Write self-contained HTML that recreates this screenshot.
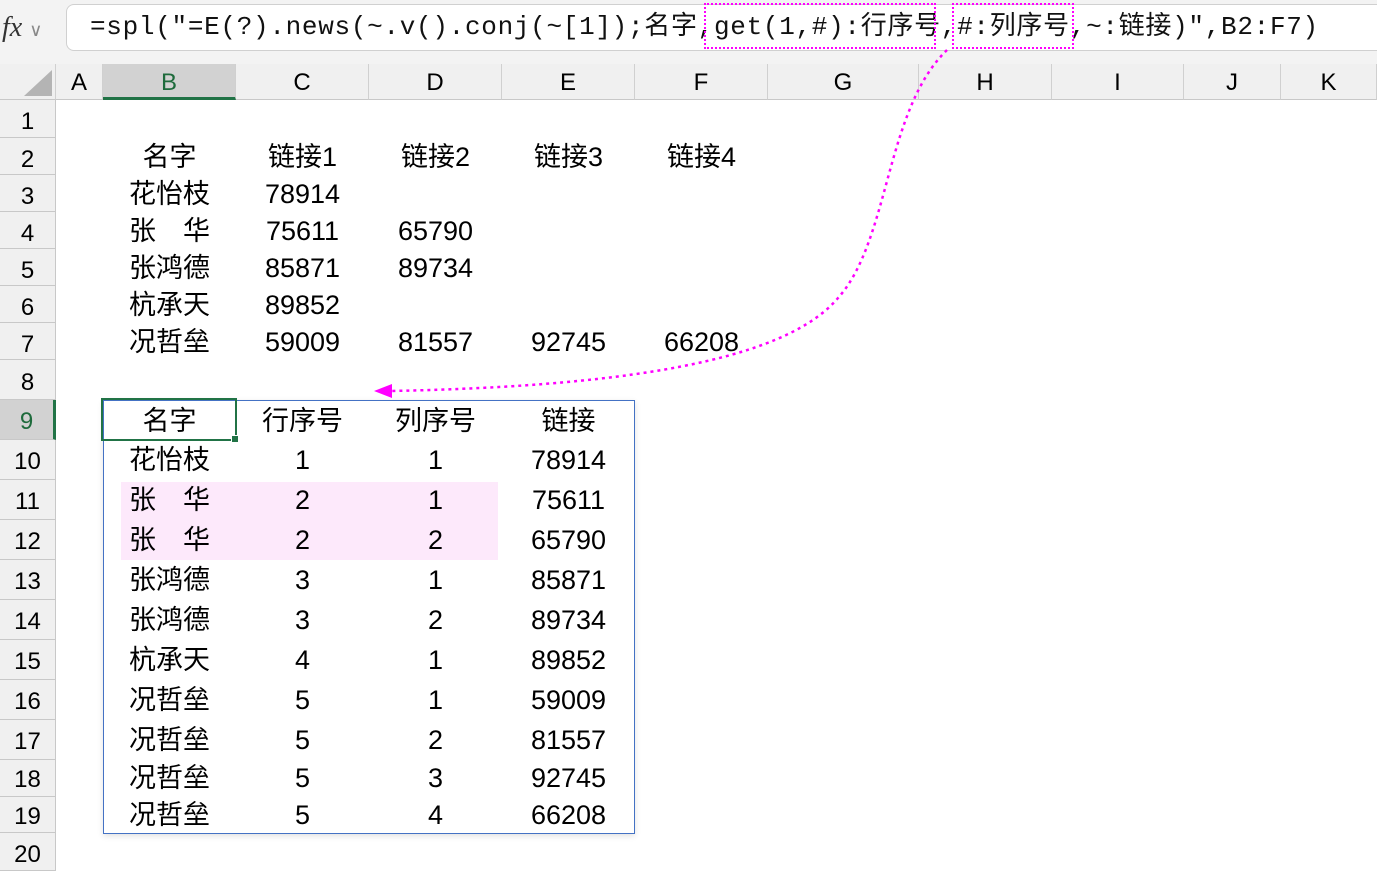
<!DOCTYPE html>
<html><head><meta charset="utf-8"><style>
*{margin:0;padding:0;box-sizing:border-box}
body{width:1377px;height:871px;overflow:hidden;background:#fff;position:relative;font-family:"Liberation Sans","Noto Sans CJK SC",sans-serif;color:#000}
.top{position:absolute;left:0;top:0;width:1377px;height:64px;background:#f3f3f3}
.fbox{position:absolute;left:66px;top:4px;width:1320px;height:47px;background:#fff;border:1px solid #d0d0d0;border-radius:8px}
.ftext{position:absolute;left:90px;top:9px;font-family:"Liberation Mono","Noto Sans CJK SC",monospace;font-size:26px;letter-spacing:0.7px;white-space:nowrap;color:#111;line-height:36px}
.hdr{position:absolute;top:64px;height:36px;line-height:38px;text-align:center;font-size:24px;background:#f0f0f0;border-right:1px solid #d0d0d0;border-bottom:1px solid #c8c8c8}
.rh{position:absolute;left:0;width:56px;text-align:center;font-size:24px;background:#f0f0f0;border-bottom:1px solid #c8c8c8;border-right:1px solid #c8c8c8;padding-top:3px}
.c{position:absolute;text-align:center;font-size:27px;white-space:nowrap}
</style></head><body>
<div class="top"></div>
<div style="position:absolute;left:0;top:8px;width:56px;height:40px;font-family:'Liberation Serif',serif;font-style:italic;font-size:28px;line-height:40px;color:#333;padding-left:2px">fx <span style="font-style:normal;font-size:18px;color:#888;font-family:'Liberation Sans'">∨</span></div>
<div class="fbox"></div>
<div class="ftext">=spl("=E(?).news(~.v().conj(~[1]);名字,get(1,#):行序号,#:列序号,~:链接)",B2:F7)</div>
<div style="position:absolute;left:704px;top:3px;width:232px;height:46px;border:2px dotted #f0f"></div>
<div style="position:absolute;left:952px;top:3px;width:122px;height:46px;border:2px dotted #f0f"></div>

<div class="hdr" style="left:0;width:56px"></div>
<svg style="position:absolute;left:18px;top:68px" width="36" height="30"><polygon points="34,2 34,28 6,28" fill="#b4b4b4"/></svg>
<div class="hdr" style="left:56px;width:47px">A</div>
<div class="hdr" style="left:103px;width:133px;background:#d2d2d2;color:#1e6b3c;border-bottom:3px solid #217346">B</div>
<div class="hdr" style="left:236px;width:133px">C</div>
<div class="hdr" style="left:369px;width:133px">D</div>
<div class="hdr" style="left:502px;width:133px">E</div>
<div class="hdr" style="left:635px;width:133px">F</div>
<div class="hdr" style="left:768px;width:151px">G</div>
<div class="hdr" style="left:919px;width:133px">H</div>
<div class="hdr" style="left:1052px;width:132px">I</div>
<div class="hdr" style="left:1184px;width:97px">J</div>
<div class="hdr" style="left:1281px;width:96px">K</div>

<div class="rh" style="top:100px;height:38px;line-height:38px">1</div>
<div class="rh" style="top:138px;height:37px;line-height:37px">2</div>
<div class="rh" style="top:175px;height:37px;line-height:37px">3</div>
<div class="rh" style="top:212px;height:37px;line-height:37px">4</div>
<div class="rh" style="top:249px;height:37px;line-height:37px">5</div>
<div class="rh" style="top:286px;height:37px;line-height:37px">6</div>
<div class="rh" style="top:323px;height:37px;line-height:37px">7</div>
<div class="rh" style="top:360px;height:40px;line-height:40px">8</div>
<div class="rh" style="top:400px;height:40px;line-height:37px;background:#d2d2d2;color:#1e6b3c;border-right:3px solid #217346">9</div>
<div class="rh" style="top:440px;height:40px;line-height:37px">10</div>
<div class="rh" style="top:480px;height:40px;line-height:37px">11</div>
<div class="rh" style="top:520px;height:40px;line-height:37px">12</div>
<div class="rh" style="top:560px;height:40px;line-height:37px">13</div>
<div class="rh" style="top:600px;height:40px;line-height:37px">14</div>
<div class="rh" style="top:640px;height:40px;line-height:37px">15</div>
<div class="rh" style="top:680px;height:40px;line-height:37px">16</div>
<div class="rh" style="top:720px;height:40px;line-height:37px">17</div>
<div class="rh" style="top:760px;height:37px;line-height:34px">18</div>
<div class="rh" style="top:797px;height:36px;line-height:33px">19</div>
<div class="rh" style="top:833px;height:38px;line-height:37px">20</div>

<div class="c" style="left:103px;width:133px;top:139px;line-height:37px">名字</div>
<div class="c" style="left:236px;width:133px;top:139px;line-height:37px">链接1</div>
<div class="c" style="left:369px;width:133px;top:139px;line-height:37px">链接2</div>
<div class="c" style="left:502px;width:133px;top:139px;line-height:37px">链接3</div>
<div class="c" style="left:635px;width:133px;top:139px;line-height:37px">链接4</div>

<div class="c" style="left:103px;width:133px;top:176px;line-height:37px">花怡枝</div>
<div class="c" style="left:236px;width:133px;top:176px;line-height:37px">78914</div>
<div class="c" style="left:103px;width:133px;top:213px;line-height:37px">张　华</div>
<div class="c" style="left:236px;width:133px;top:213px;line-height:37px">75611</div>
<div class="c" style="left:369px;width:133px;top:213px;line-height:37px">65790</div>
<div class="c" style="left:103px;width:133px;top:250px;line-height:37px">张鸿德</div>
<div class="c" style="left:236px;width:133px;top:250px;line-height:37px">85871</div>
<div class="c" style="left:369px;width:133px;top:250px;line-height:37px">89734</div>
<div class="c" style="left:103px;width:133px;top:287px;line-height:37px">杭承天</div>
<div class="c" style="left:236px;width:133px;top:287px;line-height:37px">89852</div>
<div class="c" style="left:103px;width:133px;top:324px;line-height:37px">况哲垒</div>
<div class="c" style="left:236px;width:133px;top:324px;line-height:37px">59009</div>
<div class="c" style="left:369px;width:133px;top:324px;line-height:37px">81557</div>
<div class="c" style="left:502px;width:133px;top:324px;line-height:37px">92745</div>
<div class="c" style="left:635px;width:133px;top:324px;line-height:37px">66208</div>

<div style="position:absolute;left:103px;top:400px;width:532px;height:434px;border:1px solid #4472c4;box-shadow:0 2px 6px rgba(0,0,0,0.12)"></div>
<div style="position:absolute;left:121px;top:482px;width:377px;height:78px;background:#fde9fb"></div>
<div style="position:absolute;left:101px;top:398px;width:136px;height:43px;border:2px solid #217346"></div>
<div style="position:absolute;left:231px;top:435px;width:8px;height:8px;background:#217346;border:1px solid #fff"></div>

<div class="c" style="left:103px;width:133px;top:401px;line-height:40px">名字</div>
<div class="c" style="left:236px;width:133px;top:401px;line-height:40px">行序号</div>
<div class="c" style="left:369px;width:133px;top:401px;line-height:40px">列序号</div>
<div class="c" style="left:502px;width:133px;top:401px;line-height:40px">链接</div>

<div class="c" style="left:103px;width:133px;top:440px;line-height:40px">花怡枝</div><div class="c" style="left:236px;width:133px;top:440px;line-height:40px">1</div><div class="c" style="left:369px;width:133px;top:440px;line-height:40px">1</div><div class="c" style="left:502px;width:133px;top:440px;line-height:40px">78914</div>
<div class="c" style="left:103px;width:133px;top:480px;line-height:40px">张　华</div><div class="c" style="left:236px;width:133px;top:480px;line-height:40px">2</div><div class="c" style="left:369px;width:133px;top:480px;line-height:40px">1</div><div class="c" style="left:502px;width:133px;top:480px;line-height:40px">75611</div>
<div class="c" style="left:103px;width:133px;top:520px;line-height:40px">张　华</div><div class="c" style="left:236px;width:133px;top:520px;line-height:40px">2</div><div class="c" style="left:369px;width:133px;top:520px;line-height:40px">2</div><div class="c" style="left:502px;width:133px;top:520px;line-height:40px">65790</div>
<div class="c" style="left:103px;width:133px;top:560px;line-height:40px">张鸿德</div><div class="c" style="left:236px;width:133px;top:560px;line-height:40px">3</div><div class="c" style="left:369px;width:133px;top:560px;line-height:40px">1</div><div class="c" style="left:502px;width:133px;top:560px;line-height:40px">85871</div>
<div class="c" style="left:103px;width:133px;top:600px;line-height:40px">张鸿德</div><div class="c" style="left:236px;width:133px;top:600px;line-height:40px">3</div><div class="c" style="left:369px;width:133px;top:600px;line-height:40px">2</div><div class="c" style="left:502px;width:133px;top:600px;line-height:40px">89734</div>
<div class="c" style="left:103px;width:133px;top:640px;line-height:40px">杭承天</div><div class="c" style="left:236px;width:133px;top:640px;line-height:40px">4</div><div class="c" style="left:369px;width:133px;top:640px;line-height:40px">1</div><div class="c" style="left:502px;width:133px;top:640px;line-height:40px">89852</div>
<div class="c" style="left:103px;width:133px;top:680px;line-height:40px">况哲垒</div><div class="c" style="left:236px;width:133px;top:680px;line-height:40px">5</div><div class="c" style="left:369px;width:133px;top:680px;line-height:40px">1</div><div class="c" style="left:502px;width:133px;top:680px;line-height:40px">59009</div>
<div class="c" style="left:103px;width:133px;top:720px;line-height:40px">况哲垒</div><div class="c" style="left:236px;width:133px;top:720px;line-height:40px">5</div><div class="c" style="left:369px;width:133px;top:720px;line-height:40px">2</div><div class="c" style="left:502px;width:133px;top:720px;line-height:40px">81557</div>
<div class="c" style="left:103px;width:133px;top:760px;line-height:37px">况哲垒</div><div class="c" style="left:236px;width:133px;top:760px;line-height:37px">5</div><div class="c" style="left:369px;width:133px;top:760px;line-height:37px">3</div><div class="c" style="left:502px;width:133px;top:760px;line-height:37px">92745</div>
<div class="c" style="left:103px;width:133px;top:797px;line-height:37px">况哲垒</div><div class="c" style="left:236px;width:133px;top:797px;line-height:37px">5</div><div class="c" style="left:369px;width:133px;top:797px;line-height:37px">4</div><div class="c" style="left:502px;width:133px;top:797px;line-height:37px">66208</div>

<svg style="position:absolute;left:0;top:0" width="1377" height="871">
<path d="M947 50 C 885 110, 890 240, 838 298 C 790 355, 650 386, 390 391" fill="none" stroke="#f0f" stroke-width="2.5" stroke-dasharray="3,4"/>
<polygon points="374,391 392,384 392,398" fill="#f0f"/>
</svg>
</body></html>
